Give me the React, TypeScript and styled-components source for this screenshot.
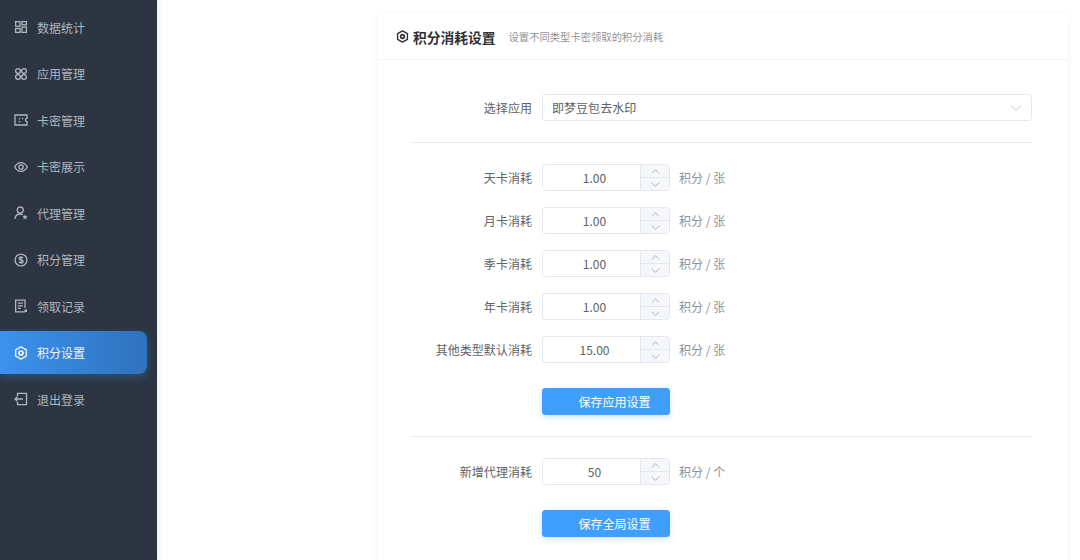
import { ReactNode } from 'react'
import styled, { createGlobalStyle } from 'styled-components'

const GlobalStyle = createGlobalStyle`
  html, body {
    margin: 0;
    padding: 0;
    background: #fff;
  }
  body {
    font-family: "Noto Sans CJK SC", "Liberation Sans", sans-serif;
  }
`

const Page = styled.div`
  display: flex;
  width: 1080px;
  height: 560px;
  overflow: hidden;
`

const Sidebar = styled.nav`
  flex: 0 0 157px;
  display: flex;
  flex-direction: column;
  gap: 3.5px;
  padding: 5.5px 10px 0 0;
  box-sizing: border-box;
  background: #2c3541;
  box-shadow: 2px 0 6px rgba(0, 21, 41, 0.08);
`

const MenuItem = styled.div<{ $active?: boolean }>`
  flex: 0 0 43px;
  display: flex;
  align-items: center;
  gap: 9px;
  padding-left: 14px;
  font-size: 12.04px;
  color: ${props => (props.$active ? '#eef5fd' : '#aeb6bf')};
  background: ${props => (props.$active ? 'linear-gradient(90deg, #3c92ee, #2f72bd)' : 'transparent')};
  border-radius: 0 8px 8px 0;
  box-shadow: ${props => (props.$active ? '0 3px 10px rgba(64, 158, 255, 0.28)' : 'none')};
`

const Icon = styled.svg`
  width: 14px;
  height: 14px;
  flex: none;
  fill: none;
  stroke: currentColor;
  stroke-width: 1.3;
`

const Main = styled.main`
  flex: 1;
  padding: 14px 12px 0 221px;
`

const Card = styled.section`
  height: 600px;
  background: #fff;
  box-shadow: 0 1px 8px rgba(0, 0, 0, 0.05);
  border-radius: 3px;
`

const CardHeader = styled.header`
  height: 46px;
  box-sizing: border-box;
  display: flex;
  align-items: center;
  padding-left: 18px;
  border-bottom: 1px solid #f2f3f5;
`

const CardTitle = styled.h2`
  display: flex;
  align-items: center;
  gap: 4px;
  margin: 0;
  font-size: 13.76px;
  font-weight: 700;
  color: #303133;
  ${Icon} {
    width: 13px;
    height: 13px;
    stroke-width: 1.5;
  }
`

const CardHint = styled.span`
  margin-left: 13px;
  font-size: 10.32px;
  color: #909399;
`

const CardBody = styled.div`
  padding: 34px 36px 0 33px;
`

const FormRow = styled.div<{ $gap?: number }>`
  display: flex;
  align-items: center;
  height: 27px;
  margin-bottom: ${props => props.$gap ?? 16}px;
`

const FieldLabel = styled.label`
  width: 121px;
  padding-right: 10px;
  box-sizing: content-box;
  text-align: right;
  font-size: 12.04px;
  color: #606266;
  white-space: nowrap;
`

const Select = styled.div`
  flex: 1;
  height: 27px;
  box-sizing: border-box;
  display: flex;
  align-items: center;
  justify-content: space-between;
  padding: 0 9px;
  border: 1px solid #e4e7ed;
  border-radius: 3.5px;
  font-size: 12.04px;
  color: #606266;
  svg {
    color: #c0c4cc;
    width: 12px;
    height: 12px;
    stroke-width: 1;
  }
`

const Divider = styled.hr`
  height: 1px;
  margin: 0;
  border: 0;
  background: #e9ebef;
`

const Stepper = styled.div`
  flex: 0 0 128px;
  height: 27px;
  box-sizing: border-box;
  display: flex;
  border: 1px solid #e4e7ed;
  border-radius: 3.5px;
  overflow: hidden;
`

const StepperValue = styled.span`
  flex: 1;
  padding-left: 6px;
  line-height: 25px;
  text-align: center;
  font-size: 12.04px;
  color: #606266;
`

const StepperControls = styled.div`
  flex: 0 0 28px;
  display: flex;
  flex-direction: column;
  border-left: 1px solid #e4e7ed;
  background: #f5f7fa;
`

const StepperButton = styled.span`
  flex: 1;
  display: flex;
  align-items: center;
  justify-content: center;
  color: #a8abb2;
  & + & {
    border-top: 1px solid #e4e7ed;
  }
  svg {
    width: 9px;
    height: 9px;
    stroke-width: 1.2;
  }
`

const Unit = styled.span`
  margin-left: 9px;
  font-size: 12.04px;
  color: #909399;
`

const SaveButton = styled.button`
  display: block;
  width: 128px;
  height: 27px;
  margin-left: 131px;
  padding: 0 0 0 17px;
  border: 0;
  border-radius: 3.5px;
  background: #409eff;
  box-shadow: 0 2px 6px rgba(64, 158, 255, 0.28);
  color: #fff;
  font-family: inherit;
  font-size: 12.04px;
`

const IconDashboard = () => (
  <Icon viewBox="0 0 14 14">
    <rect x="1.6" y="1.6" width="4.4" height="4.6" />
    <rect x="1.6" y="8.4" width="4.4" height="4" />
    <rect x="8" y="1.6" width="4.4" height="3.2" />
    <rect x="8" y="7" width="4.4" height="5.4" />
  </Icon>
)

const IconApps = () => (
  <Icon viewBox="0 0 14 14">
    <circle cx="4" cy="4" r="2.4" />
    <circle cx="10" cy="4" r="2.4" />
    <circle cx="4" cy="10" r="2.4" />
    <circle cx="10" cy="10" r="2.4" />
  </Icon>
)

const IconTicket = () => (
  <Icon viewBox="0 0 14 14">
    <path d="M1 2h12v3.4a1.6 1.6 0 0 0 0 3.2V12H1z" />
    <path d="M5.5 5v1.2M5.5 8v1.2M8 5.6h1.2" strokeWidth="1.5" />
  </Icon>
)

const IconEye = () => (
  <Icon viewBox="0 0 14 14">
    <path d="M.7 7C2.3 4 4.4 2.6 7 2.6S11.700 4 13.300 7c-1.600 3-3.700 4.400-6.300 4.400S2.300 10 .7 7z" />
    <circle cx="7" cy="7" r="2.200" />
  </Icon>
)

const IconAgent = () => (
  <Icon viewBox="0 0 14 14">
    <circle cx="6.200" cy="4" r="3" />
    <path d="M1 13c.2-3 2.200-5 5.200-5 1 0 1.900.2 2.600.7" />
    <path d="M11 8.600l.8 1.500 1.700.2-1.200 1.200.3 1.700-1.600-.8-1.600.8.300-1.700-1.200-1.200 1.700-.2z" fill="currentColor" stroke="none" />
  </Icon>
)

const IconCoin = () => (
  <Icon viewBox="0 0 14 14">
    <circle cx="7" cy="7" r="5.900" />
    <path d="M9 5.200C8.600 4.500 7.900 4.200 7 4.200c-1.200 0-2 .6-2 1.400 0 1.900 4.100.9 4.100 2.800 0 .9-.9 1.400-2.100 1.400-1 0-1.800-.4-2.200-1.100M7 3.200v7.600" />
  </Icon>
)

const IconRecord = () => (
  <Icon viewBox="0 0 14 14">
    <path d="M11 9V1.200H1.600v11.600H11" />
    <path d="M3.800 4.200h5M3.800 6.800h5M3.800 9.400h3" />
    <rect x="10.600" y="10.400" width="2.400" height="2.600" fill="currentColor" stroke="none" />
  </Icon>
)

const IconSetting = () => (
  <Icon viewBox="0 0 14 14">
    <path d="M7 .9l5.300 3v6.200L7 13.100l-5.300-3V3.900z" strokeLinejoin="round" />
    <circle cx="7" cy="7" r="2" strokeWidth="1.700" />
  </Icon>
)

const IconLogout = () => (
  <Icon viewBox="0 0 14 14">
    <path d="M3.500 4V1.300h9v11.400h-9V10" />
    <path d="M9 7H1M3.400 4.600L1 7l2.400 2.400" />
  </Icon>
)

const IconChevronDown = () => (
  <Icon viewBox="0 0 12 12">
    <path d="M1 3.500l5 5 5-5" />
  </Icon>
)

const IconChevronUp = () => (
  <Icon viewBox="0 0 12 12">
    <path d="M1.500 8.500L6 3.500l4.500 5" />
  </Icon>
)

const menu: { label: string; icon: ReactNode; active?: boolean }[] = [
  { label: '数据统计', icon: <IconDashboard /> },
  { label: '应用管理', icon: <IconApps /> },
  { label: '卡密管理', icon: <IconTicket /> },
  { label: '卡密展示', icon: <IconEye /> },
  { label: '代理管理', icon: <IconAgent /> },
  { label: '积分管理', icon: <IconCoin /> },
  { label: '领取记录', icon: <IconRecord /> },
  { label: '积分设置', icon: <IconSetting />, active: true },
  { label: '退出登录', icon: <IconLogout /> },
]

const costs = [
  { label: '天卡消耗', value: '1.00' },
  { label: '月卡消耗', value: '1.00' },
  { label: '季卡消耗', value: '1.00' },
  { label: '年卡消耗', value: '1.00' },
  { label: '其他类型默认消耗', value: '15.00' },
]

const NumberRow = ({ label, value, unit, gap }: { label: string; value: string; unit: string; gap?: number }) => (
  <FormRow $gap={gap}>
    <FieldLabel>{label}</FieldLabel>
    <Stepper>
      <StepperValue>{value}</StepperValue>
      <StepperControls>
        <StepperButton><IconChevronUp /></StepperButton>
        <StepperButton><IconChevronDown /></StepperButton>
      </StepperControls>
    </Stepper>
    <Unit>{unit}</Unit>
  </FormRow>
)

const App = () => (
  <Page>
    <GlobalStyle />
    <Sidebar>
      {menu.map(item => (
        <MenuItem key={item.label} $active={item.active}>
          {item.icon}
          {item.label}
        </MenuItem>
      ))}
    </Sidebar>
    <Main>
      <Card>
        <CardHeader>
          <CardTitle>
            <IconSetting />
            积分消耗设置
          </CardTitle>
          <CardHint>设置不同类型卡密领取的积分消耗</CardHint>
        </CardHeader>
        <CardBody>
          <FormRow $gap={21}>
            <FieldLabel>选择应用</FieldLabel>
            <Select>
              即梦豆包去水印
              <IconChevronDown />
            </Select>
          </FormRow>
          <Divider />
          <div style={{ height: 21 }} />
          {costs.map((cost, index) => (
            <NumberRow
              key={cost.label}
              label={cost.label}
              value={cost.value}
              unit="积分 / 张"
              gap={index === costs.length - 1 ? 25 : 16}
            />
          ))}
          <SaveButton>保存应用设置</SaveButton>
          <div style={{ height: 21 }} />
          <Divider />
          <div style={{ height: 21 }} />
          <NumberRow label="新增代理消耗" value="50" unit="积分 / 个" gap={25} />
          <SaveButton>保存全局设置</SaveButton>
        </CardBody>
      </Card>
    </Main>
  </Page>
)

export default App
